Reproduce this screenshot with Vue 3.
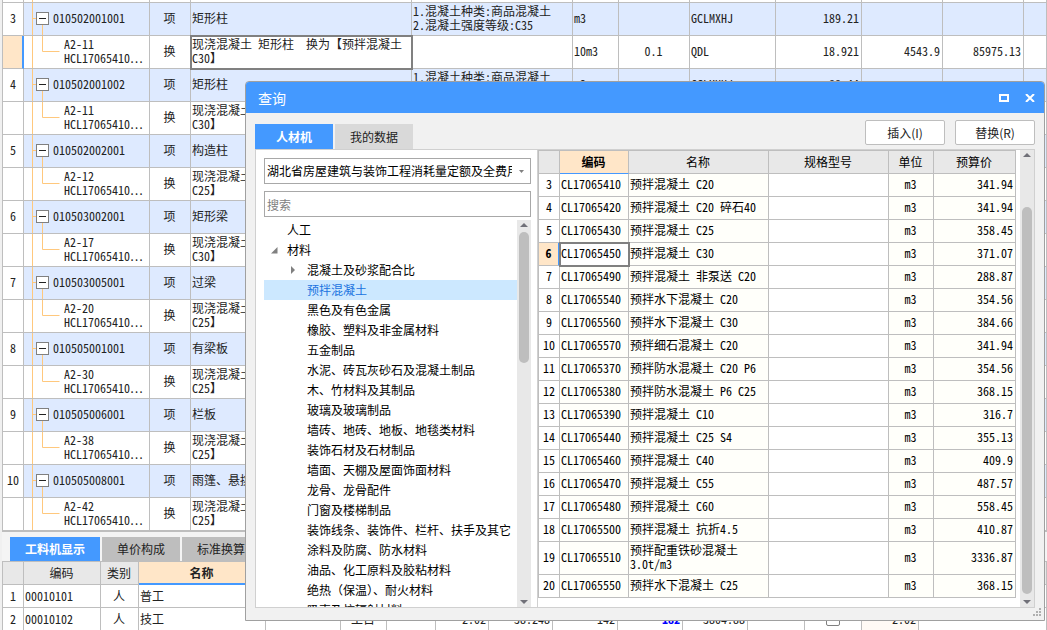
<script setup>
import { ref } from 'vue'

const items = [
  { no: 3, code: '010502001001', name: '矩形柱', desc: ['1.混凝土种类:商品混凝土', '2.混凝土强度等级:C35'], unit: 'm3', expr: 'GCLMXHJ', qty: '189.21',
    child: { code: 'A2-11', name: '矩形柱', grade: 'C30', unit: '10m3', factor: '0.1', expr: 'QDL', qty: '18.921', price: '4543.9', total: '85975.13', active: true } },
  { no: 4, code: '010502001002', name: '矩形柱', desc: ['1.混凝土种类:商品混凝土', '2.混凝土强度等级:C35'], unit: 'm3', expr: 'GCLMXHJ', qty: '88.44',
    child: { code: 'A2-11', name: '矩形柱', grade: 'C30' } },
  { no: 5, code: '010502002001', name: '构造柱', child: { code: 'A2-12', name: '构造柱', grade: 'C25' } },
  { no: 6, code: '010503002001', name: '矩形梁', child: { code: 'A2-17', name: '矩形梁', grade: 'C30' } },
  { no: 7, code: '010503005001', name: '过梁', child: { code: 'A2-20', name: '过梁', grade: 'C25' } },
  { no: 8, code: '010505001001', name: '有梁板', child: { code: 'A2-30', name: '有梁板', grade: 'C25' } },
  { no: 9, code: '010505006001', name: '栏板', child: { code: 'A2-38', name: '栏板', grade: 'C25' } },
  { no: 10, code: '010505008001', name: '雨篷、悬挑板', child: { code: 'A2-42', name: '雨篷', grade: 'C25' } },
]

const billCols = [21, 126, 41, 221, 161, 46, 71, 86, 86, 81, 81]
const labourCols = [21, 77, 38, 127, 75, 46, 49, 53, 64, 65, 65, 65, 57, 57, 57]

const lowerTabs = ['工料机显示', '单价构成', '标准换算']
const labour = [
  { no: 1, code: '00010101', name: '普工' },
  { no: 2, code: '00010102', name: '技工', unit: '工日', a: '2.02', b: '38.248', c: '142', d: '182', e: '3804.88', f: '2.02' },
]

const materials = [
  '混凝土及砂浆配合比', '预拌混凝土', '黑色及有色金属', '橡胶、塑料及非金属材料', '五金制品',
  '水泥、砖瓦灰砂石及混凝土制品', '木、竹材料及其制品', '玻璃及玻璃制品', '墙砖、地砖、地板、地毯类材料',
  '装饰石材及石材制品', '墙面、天棚及屋面饰面材料', '龙骨、龙骨配件', '门窗及楼梯制品',
  '装饰线条、装饰件、栏杆、扶手及其它', '涂料及防腐、防水材料', '油品、化工原料及胶粘材料',
  '绝热（保温）、耐火材料', '吸声及抗辐射材料',
]
const selected = ref('预拌混凝土')
const keyword = ref('')

const rows = [
  [3, 'CL17065410', '预拌混凝土 C20', '341.94'],
  [4, 'CL17065420', '预拌混凝土 C20 碎石40', '341.94'],
  [5, 'CL17065430', '预拌混凝土 C25', '358.45'],
  [6, 'CL17065450', '预拌混凝土 C30', '371.07'],
  [7, 'CL17065490', '预拌混凝土 非泵送 C20', '288.87'],
  [8, 'CL17065540', '预拌水下混凝土 C20', '354.56'],
  [9, 'CL17065560', '预拌水下混凝土 C30', '384.66'],
  [10, 'CL17065570', '预拌细石混凝土 C20', '341.94'],
  [11, 'CL17065370', '预拌防水混凝土 C20 P6', '354.56'],
  [12, 'CL17065380', '预拌防水混凝土 P6 C25', '368.15'],
  [13, 'CL17065390', '预拌混凝土 C10', '316.7'],
  [14, 'CL17065440', '预拌混凝土 C25 S4', '355.13'],
  [15, 'CL17065460', '预拌混凝土 C40', '409.9'],
  [16, 'CL17065470', '预拌混凝土 C55', '487.57'],
  [17, 'CL17065480', '预拌混凝土 C60', '558.45'],
  [18, 'CL17065500', '预拌混凝土 抗折4.5', '410.87'],
  [19, 'CL17065510', '预拌配重铁砂混凝土 3.0t/m3', '3336.87'],
  [20, 'CL17065550', '预拌水下混凝土 C25', '368.15'],
]
const px = (w) => ({ width: w + 'px' })
</script>

<template>
  <main class="page">
    <section class="upper">
      <table class="sheet bill">
        <colgroup>
          <col v-for="(w, i) in billCols" :key="i" :style="px(w)"><col>
        </colgroup>
        <tbody>
          <tr class="stub">
            <td></td>
            <td class="treecell"><svg width="10" height="2"><path d="M8.500 0v2" /></svg></td>
            <td v-for="n in 10" :key="n"></td>
          </tr>
          <template v-for="item in items" :key="item.no">
            <tr class="parent">
              <td class="no">{{ item.no }}</td>
              <td class="treecell">
                <div class="node">
                  <svg width="29" height="32">
                    <path d="M8.500 0v32M8.500 15.500h4M18.500 22v10" />
                    <rect x="12.500" y="9.500" width="12" height="12" class="box" />
                    <path d="M15 15.500h7" class="minus" />
                  </svg>
                  <span>{{ item.code }}</span>
                </div>
              </td>
              <td class="center">项</td>
              <td>{{ item.name }}</td>
              <td><div v-for="line in item.desc" :key="line">{{ line }}</div></td>
              <td>{{ item.unit }}</td>
              <td></td>
              <td>{{ item.expr }}</td>
              <td class="num">{{ item.qty }}</td>
              <td></td><td></td><td></td>
            </tr>
            <tr>
              <td :class="['no', { current: item.child.active }]"></td>
              <td class="treecell">
                <div class="node">
                  <svg width="40" height="32"><path d="M8.500 0v32M18.500 0v15.500h17" /></svg>
                  <span>{{ item.child.code }}<br>HCL17065410⋯</span>
                </div>
              </td>
              <td class="center">换</td>
              <td :class="{ focus: item.child.active }">现浇混凝土 {{ item.child.name }}　换为【预拌混凝土<br>{{ item.child.grade }}】</td>
              <td></td>
              <td>{{ item.child.unit }}</td>
              <td class="center">{{ item.child.factor }}</td>
              <td>{{ item.child.expr }}</td>
              <td class="num">{{ item.child.qty }}</td>
              <td class="num">{{ item.child.price }}</td>
              <td class="num">{{ item.child.total }}</td>
              <td></td>
            </tr>
          </template>
        </tbody>
      </table>
    </section>

    <section class="lower">
      <nav class="tabs">
        <button v-for="(t, i) in lowerTabs" :key="t" type="button" :class="{ on: i === 0 }">{{ t }}</button>
      </nav>
      <table class="sheet labour">
        <colgroup>
          <col v-for="(w, i) in labourCols" :key="i" :style="px(w)"><col>
        </colgroup>
        <thead>
          <tr>
            <th></th><th>编码</th><th>类别</th><th class="hot">名称</th>
            <th v-for="n in 12" :key="n"></th>
          </tr>
        </thead>
        <tbody>
          <tr v-for="r in labour" :key="r.no">
            <td class="no">{{ r.no }}</td>
            <td>{{ r.code }}</td>
            <td class="center">人</td>
            <td>{{ r.name }}</td>
            <td></td>
            <td class="center">{{ r.unit }}</td>
            <td></td>
            <td class="num">{{ r.a }}</td>
            <td class="num">{{ r.b }}</td>
            <td class="num">{{ r.c }}</td>
            <td class="num blue">{{ r.d }}</td>
            <td class="num">{{ r.e }}</td>
            <td></td>
            <td class="center"><input type="checkbox" aria-label="是否暂估" class="tick"></td>
            <td class="num warm">{{ r.f }}</td>
            <td></td>
          </tr>
        </tbody>
      </table>
    </section>

    <section class="dialog" role="dialog" aria-labelledby="dialog-title">
      <header class="titlebar">
        <h1 id="dialog-title">查询</h1>
        <button type="button" aria-label="最大化"><svg width="10" height="8"><rect x="1" y="1" width="8" height="6" /></svg></button>
        <button type="button" aria-label="关闭"><svg width="10" height="8"><path d="M1 0l8 8M9 0l-8 8" /></svg></button>
      </header>
      <div class="toolbar">
        <nav class="tabs">
          <button type="button" class="on">人材机</button>
          <button type="button">我的数据</button>
        </nav>
        <div class="actions">
          <button type="button">插入(I)</button>
          <button type="button">替换(R)</button>
        </div>
      </div>
      <div class="panel">
        <aside class="side">
          <div class="combo">
            <select aria-label="定额库">
              <option>湖北省房屋建筑与装饰工程消耗量定额及全费用基价表</option>
            </select>
            <svg width="5" height="3"><path d="M0 0h5L2.500 3z" /></svg>
          </div>
          <input v-model="keyword" class="search" type="text" placeholder="搜索" aria-label="搜索">
          <div class="treewrap">
            <ul class="tree">
              <li class="l1">人工</li>
              <li class="l1"><svg width="7" height="7" class="arrow"><path d="M6.500 0v6.500H0z" /></svg>材料</li>
              <li v-for="(m, i) in materials" :key="m" :class="['l2', { picked: m === selected }]" @click="selected = m">
                <svg v-if="i === 0" width="5" height="8" class="arrow"><path d="M0 0l4 4-4 4z" /></svg>{{ m }}
              </li>
            </ul>
            <div class="scroll">
              <svg width="8" height="4"><path d="M0 4h8L4 0z" /></svg>
              <div class="track"><div class="thumb short"></div></div>
              <svg width="8" height="4"><path d="M0 0h8L4 4z" /></svg>
            </div>
          </div>
        </aside>
        <div class="results">
          <div class="gridbox">
            <table class="sheet grid">
              <colgroup>
                <col :style="px(21)"><col :style="px(69)"><col :style="px(140)"><col><col :style="px(45)"><col :style="px(82)">
              </colgroup>
              <thead>
                <tr><th></th><th class="hot">编码</th><th>名称</th><th>规格型号</th><th>单位</th><th>预算价</th></tr>
              </thead>
              <tbody>
                <tr v-for="r in rows" :key="r[0]">
                  <td :class="['no', { current: r[0] === 6 }]">{{ r[0] }}</td>
                  <td :class="['ivory', { focus: r[0] === 6 }]">{{ r[1] }}</td>
                  <td class="ivory">{{ r[2] }}</td>
                  <td></td>
                  <td class="ivory center">m3</td>
                  <td class="ivory num">{{ r[3] }}</td>
                </tr>
              </tbody>
            </table>
          </div>
          <div class="scroll">
            <svg width="8" height="4"><path d="M0 4h8L4 0z" /></svg>
            <div class="track deep"><div class="thumb"></div></div>
            <svg width="8" height="4"><path d="M0 0h8L4 4z" /></svg>
          </div>
        </div>
      </div>
      <svg class="grip" width="8" height="8"><path d="M6 0h2v2H6zM3 3h2v2H3zM6 3h2v2H6zM0 6h2v2H0zM3 6h2v2H3zM6 6h2v2H6z" /></svg>
    </section>
  </main>
</template>

<style>
body { margin: 0; }
</style>

<style scoped>
* { box-sizing: border-box; }
.page {
  position: relative;
  display: flex;
  flex-direction: column;
  height: 100vh;
  overflow: hidden;
  background: #f0f0f0;
  color: #222;
  font: 12px/14px "Noto Sans CJK SC", sans-serif;
}
button, input, select { font: inherit; color: inherit; margin: 0; }
.upper { flex: 1; min-height: 0; overflow: hidden; padding-left: 2px; }
.lower { flex: none; height: 100px; margin-left: 2px; border-top: 2px solid #bebebe; background: #f4f4f4; }

.sheet {
  width: 100%;
  table-layout: fixed;
  border-collapse: separate;
  border-spacing: 0;
  border-left: 1px solid #bebebe;
  background: #fff;
  font-family: "Noto Sans Mono CJK SC", "Noto Sans CJK SC", monospace;
}
.sheet td, .sheet th {
  padding: 0 2px 0 1px;
  border-right: 1px solid #bebebe;
  border-bottom: 1px solid #bebebe;
  overflow: hidden;
  font-weight: 400;
}
.sheet th { background: #e8e8e8; text-align: center; }
.sheet th.hot { background: #ffe6c8; border-bottom-color: #4499ff; font-weight: 700; }
.sheet .center, .sheet .no { text-align: center; }
.sheet .no { padding-left: 0; padding-right: 0; }
.sheet .num { text-align: right; }
.sheet .current { background: #ffe6c8; border-right: 2px solid #4499ff; font-weight: 700; }
.sheet .focus { outline: 2px solid #808080; outline-offset: -1px; background: #fff; }
.ivory { background: #fffffa; }
.sheet .blue { color: #00f; font-weight: 700; }
.warm { background: #fffaf5; }

.bill td { height: 33px; padding-bottom: 2px; white-space: nowrap; }
.bill .stub td { height: 3px; padding: 0; line-height: 0; }
.parent td { background: #deeaff; }
.parent td.no { background: #fff; }
.bill .treecell { padding: 0; }
.node { display: flex; align-items: center; height: 32px; }
.node svg { flex: none; }
.node span { padding-bottom: 2px; }
.stub svg { display: block; }
.treecell path { fill: none; stroke: #ffc87d; }
.treecell .box { fill: #fff; stroke: #808080; }
.treecell .minus { stroke: #222; }

.tabs { display: flex; gap: 2px; }
.tabs button { border: 0; padding: 0; background: #bebebe; white-space: nowrap; }
.tabs .on { background: #4499ff; color: #fff; font-weight: 700; }
.lower .tabs { padding: 5px 0 0 8px; }
.lower .tabs button { width: 78px; height: 24px; }
.lower .tabs .on { width: 90px; }
.labour { border-top: 1px solid #bebebe; }
.labour td, .labour th { height: 23px; }
.labour .hot { border-bottom: 2px solid #4499ff; }
.tick { appearance: none; display: block; width: 14px; height: 14px; margin: 0 auto; border: 1px solid #808080; border-radius: 2px; }

.dialog {
  position: absolute;
  inset: 81px 2px 9px 245px;
  display: flex;
  flex-direction: column;
  padding-bottom: 12px;
  border: 1px solid #a0a0a0;
  border-radius: 4px 4px 0 0;
  background: #f1f1f1;
  overflow: hidden;
}
.titlebar { display: flex; align-items: center; gap: 14px; height: 31px; padding: 0 8px 0 12px; background: #4499ff; color: #fff; }
.titlebar h1 { flex: 1; margin: 0; font-size: 14px; line-height: 20px; font-weight: 400; }
.titlebar button { display: flex; border: 0; padding: 0 1px; background: none; }
.titlebar path, .titlebar rect { fill: none; stroke: #fff; stroke-width: 2; }
.toolbar { display: flex; justify-content: space-between; padding: 7px 9px 0; height: 36px; }
.toolbar .tabs { padding-top: 4px; }
.toolbar .tabs button { width: 78px; height: 25px; background: #d9d9d9; }
.toolbar .tabs .on { background: #4499ff; }
.actions { display: flex; gap: 10px; }
.actions button { width: 80px; height: 25px; padding: 0; border: 1px solid #bebebe; border-radius: 2px; background: #fff; }

.panel { flex: 1; min-height: 0; display: flex; margin: 0 9px; border: 1px solid #d0d0d0; background: #fff; }
.side { display: flex; flex-direction: column; width: 282px; padding: 8px 6px 0 8px; border-right: 1px solid #d0d0d0; color: #000; }
.combo { display: flex; align-items: center; height: 26px; padding-right: 6px; border: 1px solid #a8a8a8; }
.combo select { flex: 1; min-width: 0; height: 24px; margin-right: 7px; padding: 0 0 0 2px; border: 0; appearance: none; background: #fff; text-overflow: clip; }
.combo path { fill: #808080; }
.search { width: 100%; height: 26px; margin-top: 7px; padding: 0 2px; border: 1px solid #a8a8a8; }
.search::placeholder { color: #808080; }
.treewrap { flex: 1; min-height: 0; display: flex; margin-top: 3px; }
.tree { flex: 1; min-width: 0; margin: 0; padding: 0; list-style: none; overflow: hidden; }
.tree li { position: relative; height: 20px; line-height: 20px; white-space: nowrap; cursor: default; }
.l1 { padding-left: 23px; }
.l2 { padding-left: 43px; }
.picked { background: #cce8ff; color: #1a73e0; }
.arrow { position: absolute; top: 7px; left: 7px; fill: #808080; }
.l2 .arrow { top: 6px; left: 27px; }
.scroll { display: flex; flex-direction: column; align-items: center; width: 14px; padding: 3px 0; background: #e8e8e8; }
.scroll svg { fill: #707078; }
.track { flex: 1; width: 10px; padding: 5px 0; }
.track.deep { padding: 50px 0 6px; }
.thumb { height: 100%; border-radius: 5px; background: #bebebe; }
.short { height: 36%; }

.results { flex: 1; min-width: 0; display: flex; gap: 4px; }
.gridbox { flex: 1; min-width: 0; overflow: hidden; }
.grid { border-top: 1px solid #bebebe; color: #000; }
.grid td, .grid th { height: 23px; }
.grid td { padding-top: 1px; padding-bottom: 3px; }
.grip { position: absolute; right: 3px; bottom: 4px; fill: #b0b0b0; }
</style>
